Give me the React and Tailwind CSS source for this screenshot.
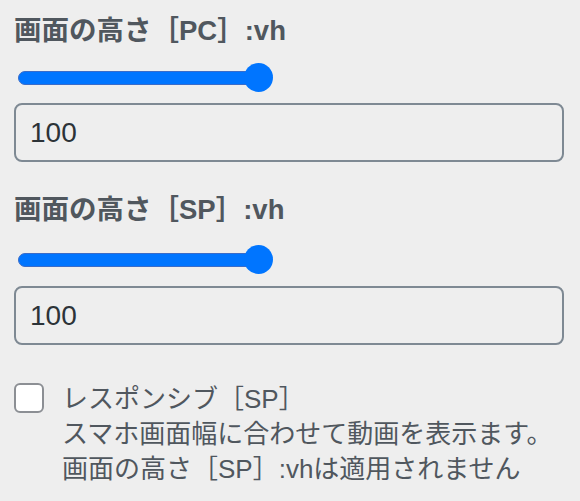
const FONT = "font-['Liberation_Sans','Noto_Sans_CJK_JP',sans-serif]";

function Slider() {
  return (
    <div className="relative ml-[4px] h-[30px] w-[255px] flex items-center">
      <div className="h-[14px] w-[241px] rounded-full bg-[#0075ff] border-[1.5px] border-[#3a6cc9]" />
      <span className="absolute right-0 top-0 h-[29px] w-[29px] rounded-full bg-[#0075ff]" />
    </div>
  );
}

function NumberField({ value }) {
  return (
    <div className="flex h-[59px] items-center rounded-[8px] border-2 border-[#7e8993] pl-[14px] text-[28px] text-[#2c3338]">
      {value}
    </div>
  );
}

function Heading({ children, className = "" }) {
  return (
    <h2 className={`text-[27.5px] font-bold leading-[34px] text-[#50575e] ${className}`}>
      {children}
    </h2>
  );
}

export default function App() {
  return (
    <div className={`min-h-[501px] w-[580px] bg-[#eeeeee] pl-[14px] pr-[16px] pt-[14px] ${FONT}`}>
      <Heading>画面の高さ［PC］:vh</Heading>
      <div className="mt-[15px]">
        <Slider />
      </div>
      <div className="mt-[10px]">
        <NumberField value="100" />
      </div>

      <Heading className="mt-[31px]">画面の高さ［SP］:vh</Heading>
      <div className="mt-[18px]">
        <Slider />
      </div>
      <div className="mt-[11px]">
        <NumberField value="100" />
      </div>

      <div className="mt-[38px] flex items-start gap-[18px]">
        <span className="h-[30px] w-[30px] shrink-0 rounded-[6px] border-2 border-[#8c8f94] bg-white" />
        <div className="-mt-[1px] text-[26px] leading-[35px] text-[#50575e]">
          <div>レスポンシブ［SP］</div>
          <div>スマホ画面幅に合わせて動画を表示ます。</div>
          <div>画面の高さ［SP］:vhは適用されません</div>
        </div>
      </div>
    </div>
  );
}
